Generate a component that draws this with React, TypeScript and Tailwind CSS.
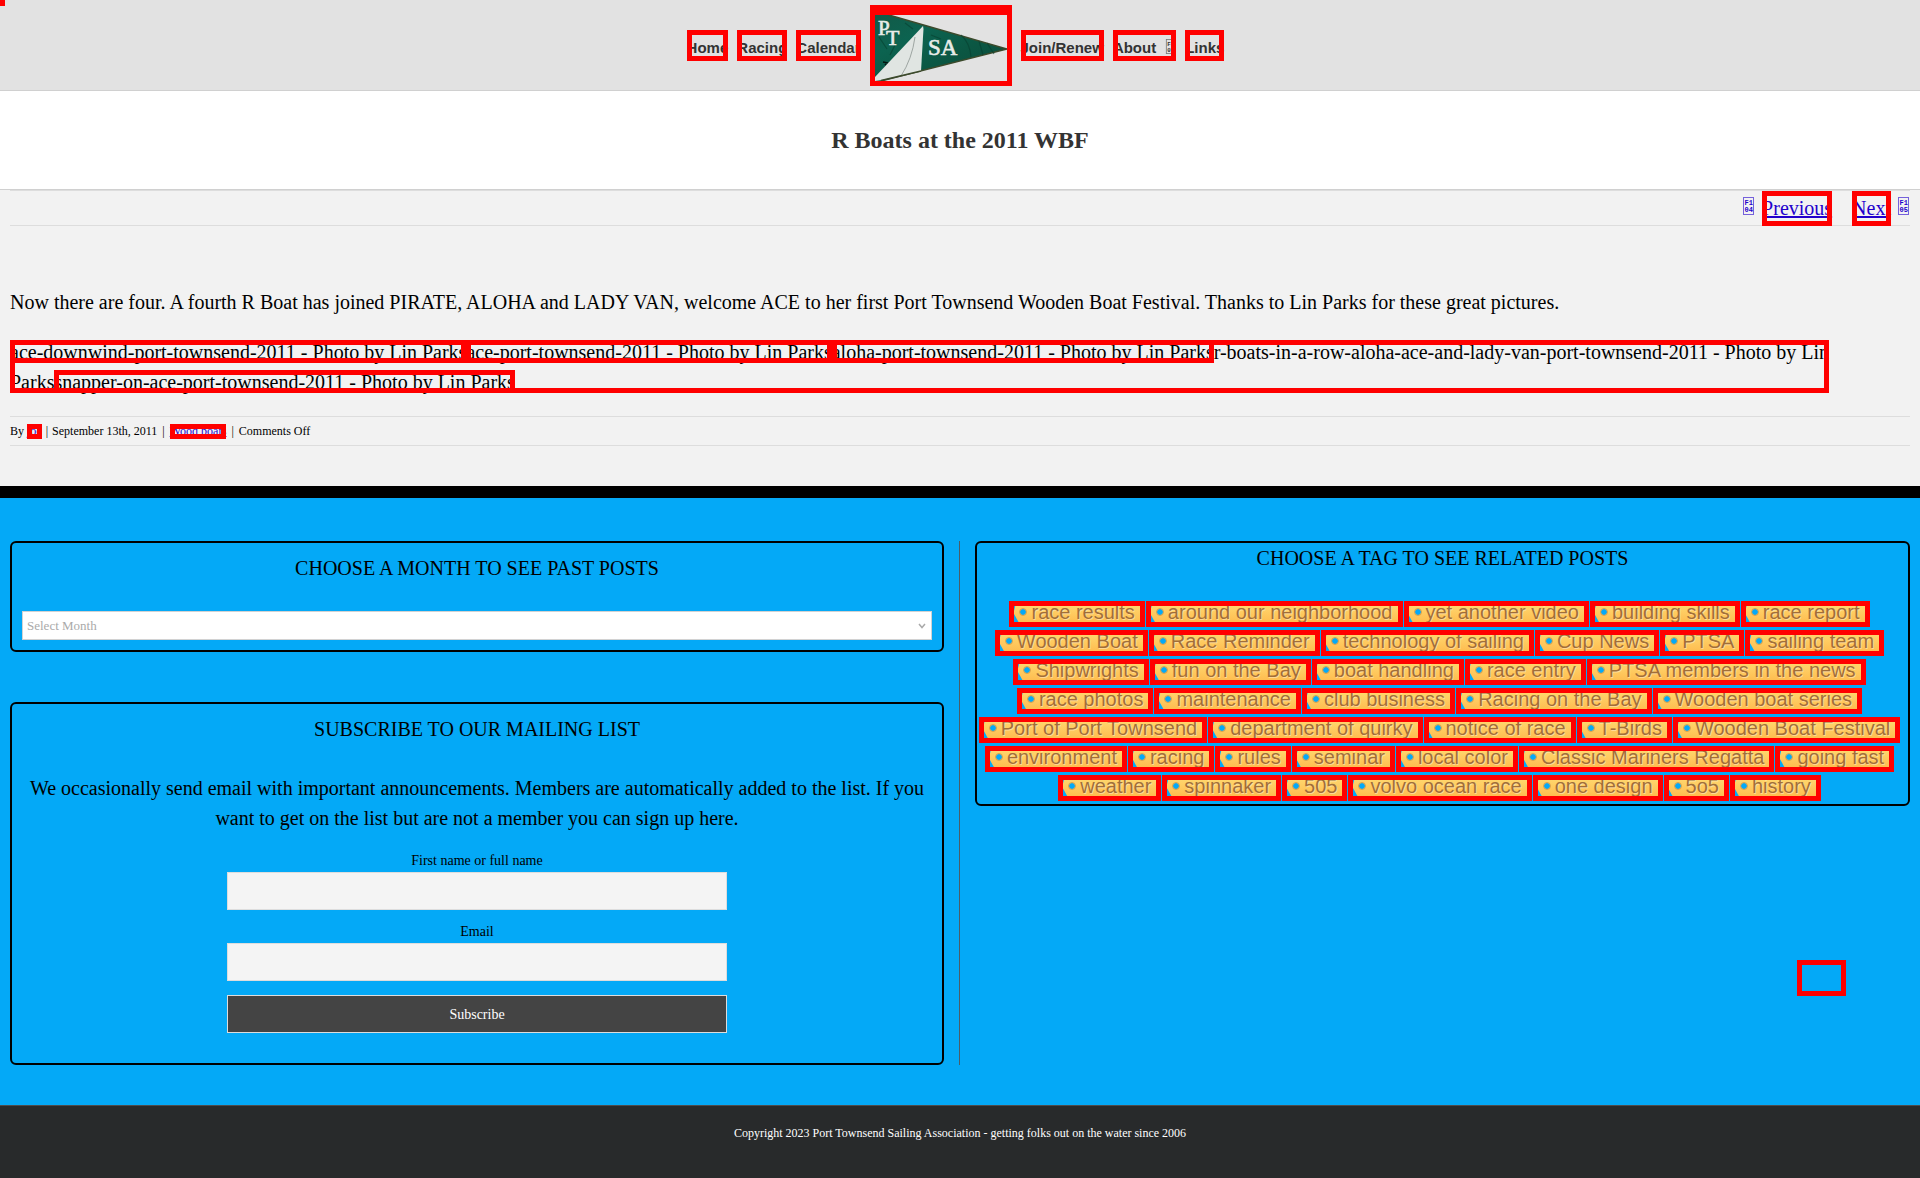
const box = "outline-5 -outline-offset-5 outline-[#ff0000]";
const serif = "font-['Liberation_Serif',serif]";
const sans = "font-['Liberation_Sans',sans-serif]";

const tagRows: string[][] = [
  ["race results", "around our neighborhood", "yet another video", "building skills", "race report"],
  ["Wooden Boat", "Race Reminder", "technology of sailing", "Cup News", "PTSA", "sailing team"],
  ["Shipwrights", "fun on the Bay", "boat handling", "race entry", "PTSA members in the news"],
  ["race photos", "maintenance", "club business", "Racing on the Bay", "Wooden boat series"],
  ["Port of Port Townsend", "department of quirky", "notice of race", "T-Birds", "Wooden Boat Festival"],
  ["environment", "racing", "rules", "seminar", "local color", "Classic Mariners Regatta", "going fast"],
  ["weather", "spinnaker", "505", "volvo ocean race", "one design", "5o5", "history"],
];

/* Hex box for an icon-font code point that has no glyph. */
function HexGlyph({ top, bottom, className }: { top: string; bottom: string; className: string }) {
  return (
    <svg viewBox="0 0 11 18" className={className} fill="none" aria-hidden="true">
      <rect x="0.5" y="0.5" width="10" height="17" stroke="currentColor" strokeOpacity="0.6" />
      <g fill="currentColor" className="font-['Liberation_Mono',monospace] font-bold" fontSize="7">
        <text x="1.500" y="8">{top}</text>
        <text x="1.500" y="15">{bottom}</text>
      </g>
    </svg>
  );
}

function NavLink({ label, icon }: { label: string; icon?: boolean }) {
  return (
    <a href="#" className={`${box} mr-[9px] flex h-[31px] items-start text-[15px] leading-[35px] font-bold whitespace-nowrap text-[#333]`}>
      {label}
      {icon && <HexGlyph top="F1" bottom="07" className="mt-[9px] ml-[9px] h-[15px] w-[11px]" />}
    </a>
  );
}

function Pennant() {
  return (
    <svg viewBox="0 0 132 66" className="block h-[66px] w-[132px]" role="img" aria-label="PTSA">
      <defs>
        <linearGradient id="cloth" x1="0" y1="0" x2="1" y2="1">
          <stop offset="0" stopColor="#125a48" />
          <stop offset="0.3" stopColor="#0c6350" />
          <stop offset="0.6" stopColor="#0b5743" />
          <stop offset="1" stopColor="#0d4a3a" />
        </linearGradient>
      </defs>
      <polygon points="0,0 14,0 132,34 6,66 0,66" fill="url(#cloth)" />
      <path d="M14 0 L132 34 L6 66" fill="none" stroke="#3c4a2c" strokeWidth="1.5" />
      <path d="M4 22 L12 34 M20 30 L15 40 M30 8 L38 14 M56 20 L66 24 M86 20 Q95 28 96 42 M104 26 L108 40 M112 28 L119 39" fill="none" stroke="#06402f" strokeWidth="1.2" opacity="0.6" />
      <path d="M8 47 l5 1 M10 49 l2 2" stroke="#04140f" strokeWidth="1.5" />
      <polygon points="48,11 48.500,14 46,56 7,65 0,66 0,62" fill="#e0e5e2" />
      <path d="M40 22 Q37 44 26 61" fill="none" stroke="#8c9490" strokeWidth="0.8" />
      <path d="M46 56 L6 65.500" stroke="#3c4a2c" strokeWidth="1.5" />
      <g className={serif} fill="#e8ece8" stroke="#e8ece8" strokeWidth="0.6">
        <text x="3" y="20" fontSize="21">P</text>
        <text x="11" y="30" fontSize="22">T</text>
        <text x="53" y="40" fontSize="23">SA</text>
      </g>
    </svg>
  );
}

function Tag({ label }: { label: string }) {
  return (
    <a href="#" className="relative block h-[26px] after:absolute after:inset-0 after:border-5 after:border-[#ff0000]">
      <span className="flex h-[26px] items-start bg-linear-to-b from-[#fedd74] to-[#feb546] pr-[10px] pl-[11px] whitespace-nowrap [clip-path:polygon(7px_0,5px_8px,4px_12px,9px_21px,12px_26px,100%_26px,100%_0)]">
        <span className="mt-[8px] size-[6px] rounded-full bg-[#04a9f7] outline-1 outline-[#d8a04c]" />
        <span className={`${sans} ml-[5px] text-[20px] leading-[23px] text-[#a16e39] [text-shadow:1px_1px_0_rgba(255,255,255,0.4)]`}>{label}</span>
      </span>
    </a>
  );
}

function Field({ id, label, type }: { id: string; label: string; type: string }) {
  return (
    <div className="mb-[11px]">
      <label htmlFor={id} className="mb-px block text-[14px] leading-[21px]">{label}</label>
      <input id={id} type={type} className="block h-[38px] w-full border border-[#ddd] bg-[#f4f4f4] px-3 text-[14px]" />
    </div>
  );
}

export default function App() {
  return (
    <div className={`${serif} relative min-h-screen bg-[#282a2b] text-[20px] leading-[30px] text-black`}>
      <a href="#content" aria-label="Skip to content" className="absolute top-0 left-0 h-[6px] w-[5px] bg-[#ff0000]" />

      <header className="border-b border-[#d0d0d0] bg-[#e2e2e2]">
        <nav className={`${sans} flex h-[90px] items-start justify-center pt-[30px]`}>
          <NavLink label="Home" />
          <NavLink label="Racing" />
          <NavLink label="Calendar" />
          <a href="#" className="-mt-[25px] mr-[9px] border-5 border-t-10 border-[#ff0000]">
            <Pennant />
          </a>
          <NavLink label="Join/Renew" />
          <NavLink label="About" icon />
          <NavLink label="Links" />
        </nav>
      </header>

      <section className="border-b border-[#d0d0d0] bg-white py-[34px] text-center">
        <h1 className="text-[24px] leading-[30px] font-bold text-[#333]">R Boats at the 2011 WBF</h1>
      </section>

      <main id="content" className="bg-[#f2f2f2] px-[10px] pb-[40px]">
        <div className="flex h-[36px] items-start justify-end border-y border-[#ddd] pr-px text-[#2200cc]">
          <HexGlyph top="F1" bottom="04" className="mt-[6px] mr-[8px] h-[18px] w-[11px]" />
          <a href="#" className={`${box} mr-[20px] h-[35px] leading-[35px] underline`}>Previous</a>
          <a href="#" className={`${box} mr-[7px] h-[35px] leading-[35px] underline`}>Next</a>
          <HexGlyph top="F1" bottom="05" className="mt-[6px] h-[18px] w-[11px]" />
        </div>

        <p className="mt-[61px]">
          Now there are four. A fourth R Boat has joined PIRATE, ALOHA and LADY VAN, welcome ACE to her first Port
          Townsend Wooden Boat Festival. Thanks to Lin Parks for these great pictures.
        </p>
        <p className="relative mt-[20px] w-fit">
          <a href="#" className={`${box} pt-px`}>ace-downwind-port-townsend-2011 - Photo by Lin Parks</a>
          <a href="#" className={`${box} pt-px`}>ace-port-townsend-2011 - Photo by Lin Parks</a>
          <a href="#" className={`${box} pt-px`}>aloha-port-townsend-2011 - Photo by Lin Parks</a>
          <a href="#">
            r-boats-in-a-row-aloha-ace-and-lady-van-port-townsend-2011 - Photo by Lin
            <br />
            Parks
            <span className="absolute inset-x-0 top-[3px] bottom-[4px] border-5 border-[#ff0000]" />
          </a>
          <a href="#" className={`${box} pt-px`}>snapper-on-ace-port-townsend-2011 - Photo by Lin Parks</a>
        </p>

        <div className="mt-[19px] flex h-[30px] items-center border-y border-[#ddd] text-[12px] leading-[28px]">
          <span>By</span>
          <a href="#" className={`${box} ml-[3px] h-[15px] leading-[15px] text-[#2200cc]`}>joe</a>
          <span className="mx-1">|</span>
          <span>September 13th, 2011</span>
          <span className="mx-[5px]">|</span>
          <a href="#" className={`${box} h-[15px] leading-[15px] text-[#2200cc] underline`}>Wood boats</a>
          <span className="mx-[5px]">|</span>
          <span>Comments Off</span>
        </div>
      </main>

      <section className="grid grid-cols-2 border-t-12 border-black bg-[#04a9f7] px-[10px] pt-[43px] pb-[40px] text-center">
        <div className="border-r border-[#4c5d67] pr-[15px]">
          <div className="rounded-[6px] border-2 border-black p-[10px]">
            <h2 className="mb-[28px]">
              <label htmlFor="month">CHOOSE A MONTH TO SEE PAST POSTS</label>
            </h2>
            <div className="relative">
              <select id="month" className="block h-[29px] w-full appearance-none border border-[#d2d2d2] bg-white px-[4px] text-[13px] leading-[18px] text-[#aaa]">
                <option>Select Month</option>
              </select>
              <svg viewBox="0 0 8 6" className="pointer-events-none absolute top-[12px] right-[6px] h-[6px] w-[8px]" fill="none" stroke="#aaa" strokeWidth="1.500">
                <path d="M1 1 L4 4.500 L7 1" />
              </svg>
            </div>
          </div>

          <div className="mt-[50px] rounded-[6px] border-2 border-black px-[10px] pt-[10px] pb-[30px]">
            <h2 className="mb-[29px]">SUBSCRIBE TO OUR MAILING LIST</h2>
            <p className="mb-[17px]">
              We occasionally send email with important announcements. Members are automatically added to the list. If
              you want to get on the list but are not a member you can sign up here.
            </p>
            <form className="mx-auto max-w-[500px]">
              <Field id="name" label="First name or full name" type="text" />
              <Field id="email" label="Email" type="email" />
              <button type="button" className="mt-[14px] block h-[38px] w-full border border-[#ddd] bg-[#444] text-[14px] leading-[21px] text-white">
                Subscribe
              </button>
            </form>
          </div>
        </div>

        <div className="pl-[15px]">
          <div className="rounded-[6px] border-2 border-black pb-[3px]">
            <h2 className="mb-[28px]">CHOOSE A TAG TO SEE RELATED POSTS</h2>
            <div className="flex flex-col gap-[3px] pr-[6px]">
              {tagRows.map((row) => (
                <div key={row[0]} className="flex justify-center gap-px">
                  {row.map((tag) => (
                    <Tag key={tag} label={tag} />
                  ))}
                </div>
              ))}
            </div>
          </div>
        </div>
      </section>

      <footer className="border-t border-[#4b4c4d] bg-[#282a2b] pt-[18px] pb-[36px] text-center text-[12px] leading-[18px] text-white">
        Copyright 2023 Port Townsend Sailing Association - getting folks out on the water since 2006
      </footer>

      <a href="#" aria-label="Back to top" className="fixed right-[74px] bottom-[182px] h-[36px] w-[49px] border-5 border-[#ff0000]" />
    </div>
  );
}
